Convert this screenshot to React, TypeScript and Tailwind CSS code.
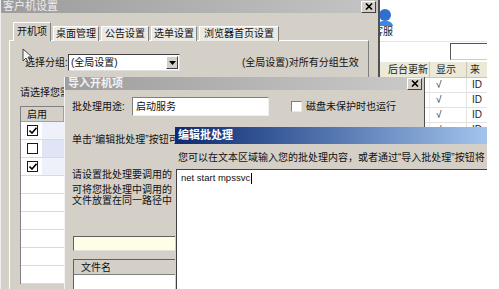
import React from 'react';

const font = "font-['Liberation_Sans','Noto_Sans_CJK_SC',sans-serif]";

const CloseBtn = () => (
  <div className="w-[15px] h-[12px] bg-[#d4d0c8] border border-t-white border-l-white border-r-[#404040] border-b-[#404040] flex items-center justify-center">
    <svg width="8" height="7" viewBox="0 0 8 7">
      <path d="M1 0.5 L7 6.5 M7 0.5 L1 6.5" stroke="#000" strokeWidth="1.6" />
    </svg>
  </div>
);

const Check = ({ on }: { on: boolean }) => (
  <div className="w-[11px] h-[11px] bg-white border border-[#1a1a1a] flex items-center justify-center">
    {on && (
      <svg width="8" height="7" viewBox="0 0 8 7">
        <path d="M0.5 3.5 L3 6 L7.5 0.8" stroke="#000" strokeWidth="1.6" fill="none" />
      </svg>
    )}
  </div>
);

const tabs = [
  { label: '桌面管理', w: 'w-[46px]' },
  { label: '公告设置', w: 'w-[48px]' },
  { label: '选单设置', w: 'w-[46px]' },
  { label: '浏览器首页设置', w: 'w-[80px]' },
];

const rowTints = ['bg-[#eef0fa]', 'bg-[#dfe5f4]', 'bg-[#eef0fa]', 'bg-white', 'bg-white', 'bg-white', 'bg-white', 'bg-white', 'bg-white'];

const BackApp = () => (
  <div className="absolute left-[372px] top-0 w-[115px] h-[289px] bg-white">
    <svg className="absolute left-[2px] top-[7px]" width="20" height="20" viewBox="0 0 20 20">
      <circle cx="11" cy="8" r="6" fill="#2f6fd0" />
      <path d="M3 19 C4 12 18 12 19 19 Z" fill="#3f86e0" />
    </svg>
    <div className="absolute left-[1px] top-[26px] text-[10px] leading-[12px] text-[#222]">客服</div>
    <div className="absolute left-[8px] top-[41px] w-[107px] h-px bg-[#e4e4e4]" />
    <div className="absolute left-[78px] top-[43px] w-[37px] h-[17px] bg-white border border-r-0 border-t-[#555] border-l-[#555] border-b-[#ccc]" />
    <div className="absolute left-[8px] top-[62px] w-[107px] flex flex-col overflow-hidden">
      <div className="h-[16px] flex bg-[#ece9d8] border-b border-[#c8c5b8] text-[10px] leading-[15px] text-[#222]">
        <div className="w-[50px] pl-[8px] border-r border-[#c8c5b8] whitespace-nowrap">后台更新</div>
        <div className="w-[37px] pl-[6px] border-r border-[#c8c5b8]">显示</div>
        <div className="w-[18px] pl-[3px] overflow-hidden whitespace-nowrap">来</div>
      </div>
      {[0, 1, 2, 3].map((i) => (
        <div key={i} className="h-[15px] flex border-b border-[#e2e2e2] text-[10px] leading-[14px] text-[#222]">
          <div className="w-[50px] border-r border-[#eee]" />
          <div className="w-[37px] pl-[6px] border-r border-[#e2e2e2]">√</div>
          <div className="w-[18px] pl-[5px] overflow-hidden whitespace-nowrap">ID</div>
        </div>
      ))}
    </div>
  </div>
);

const MainDialog = () => (
  <div className="absolute left-0 top-0 w-[380px] h-[300px] bg-[#d4d0c8] border-l border-l-[#eeeeee] border-r-2 border-r-[#505050] flex flex-col">
    <div className="h-[15px] flex items-center justify-between bg-linear-to-r from-[#9c9c9c] to-[#c4c4c4] pl-[2px] pr-[2px]">
      <span className="text-[11px] leading-[13px] text-[#eeeeee]">客户机设置</span>
      <CloseBtn />
    </div>
    <div className="pl-[8px] pt-[9px] flex flex-col">
      <div className="h-[19px] flex items-end pl-[4px] gap-[2px] relative z-10">
        <div className="w-[38px] h-[19px] bg-[#d4d0c8] border border-b-0 border-t-white border-l-white border-r-[#808080] text-[10px] leading-[17px] text-center text-[#111]">
          开机项
        </div>
        {tabs.map((t) => (
          <div
            key={t.label}
            className={`${t.w} h-[15px] bg-[#ebe9e4] border border-b-0 border-t-white border-l-white border-r-[#808080] text-[10px] leading-[14px] text-center text-[#111] whitespace-nowrap`}
          >
            {t.label}
          </div>
        ))}
      </div>
      <div className="-mt-px w-[360px] h-[260px] border border-t-white border-l-white border-r-[#808080] border-b-[#808080] pl-[10px] pt-[13px] flex flex-col text-[10px] text-[#111]">
        <div className="h-[17px] flex items-center ml-[5px]">
          <span className="w-[43px] whitespace-nowrap">选择分组:</span>
          <div className="w-[112px] h-[17px] bg-white border border-t-[#404040] border-l-[#404040] border-r-[#e0e0e0] border-b-[#e0e0e0] flex items-center justify-between pl-[2px] pr-[1px]">
            <span>(全局设置)</span>
            <div className="w-[12px] h-[13px] bg-[#d4d0c8] border border-t-white border-l-white border-r-[#404040] border-b-[#404040] flex items-center justify-center">
              <svg width="7" height="4" viewBox="0 0 7 4">
                <path d="M0 0 L7 0 L3.5 4 Z" fill="#000" />
              </svg>
            </div>
          </div>
          <span className="ml-[62px] whitespace-nowrap">(全局设置)对所有分组生效</span>
        </div>
        <div className="mt-[15px] w-[44px] h-[14px] leading-[14px] whitespace-nowrap overflow-hidden">请选择您需</div>
        <div className="mt-[6px] w-[80px] border-l border-t border-[#808080] flex flex-col">
          <div className="h-[15px] flex bg-[#d4d0c8] border-b border-[#a0a0a0]">
            <div className="w-[43px] pl-[6px] leading-[15px] border-r border-[#a0a0a0]">启用</div>
          </div>
          {rowTints.map((tint, i) => (
            <div key={i} className="h-[18px] flex bg-white border-b border-[#dadada]">
              <div className="w-[21px] flex items-center justify-end pr-[4px]">
                {i < 3 && <Check on={i !== 1} />}
              </div>
              <div className={`flex-1 ${tint}`} />
            </div>
          ))}
        </div>
      </div>
    </div>
  </div>
);

const ImportDialog = () => (
  <div className="absolute left-[64px] top-[77px] w-[361px] h-[220px] bg-[#d4d0c8] border-l border-l-[#f4f4f4] border-r border-r-[#505050] flex flex-col text-[10px] text-[#111]">
    <div className="h-[19px] flex items-center justify-between bg-linear-to-r from-[#9e9e9e] to-[#cacaca] pl-[3px] pr-[2px]">
      <span className="text-[11px] leading-[13px] font-bold text-[#f2f2f2]">导入开机项</span>
      <CloseBtn />
    </div>
    <div className="pl-[7px] flex flex-col">
      <div className="mt-[7px] h-[19px] flex items-center">
        <span className="w-[60px] whitespace-nowrap">批处理用途:</span>
        <div className="w-[137px] h-[19px] bg-white border border-t-[#808080] border-l-[#808080] border-r-[#f0f0f0] border-b-[#f0f0f0] pl-[3px] leading-[17px]">
          启动服务
        </div>
        <div className="ml-[22px] w-[11px] h-[11px] bg-white border border-t-[#808080] border-l-[#808080] border-r-[#e8e8e8] border-b-[#e8e8e8]" />
        <span className="ml-[4px] whitespace-nowrap">磁盘未保护时也运行</span>
      </div>
      <div className="mt-[18px] w-[103px] leading-[12px] whitespace-nowrap overflow-hidden">单击“编辑批处理”按钮可</div>
      <div className="mt-[23px] w-[103px] leading-[12px] whitespace-nowrap overflow-hidden">请设置批处理要调用的</div>
      <div className="mt-[3px] w-[103px] leading-[11px] whitespace-nowrap overflow-hidden">可将您批处理中调用的</div>
      <div className="w-[103px] leading-[11px] whitespace-nowrap overflow-hidden">文件放置在同一路径中</div>
      <div className="mt-[30px] ml-[1px] w-[200px] h-[15px] bg-[#fffde6] border border-t-[#606060] border-l-[#606060] border-r-[#e0e0e0] border-b-[#e0e0e0]" />
      <div className="mt-[8px] ml-[1px] w-[200px] h-[40px] bg-white border border-t-[#606060] border-l-[#606060] flex flex-col">
        <div className="h-[15px] bg-[#d4d0c8] border-b border-[#808080] pl-[7px] leading-[15px]">文件名</div>
      </div>
    </div>
  </div>
);

const EditDialog = () => (
  <div className="absolute left-[175px] top-[127px] w-[312px] h-[170px] bg-[#d4d0c8] flex flex-col text-[10px] text-[#111]">
    <div className="h-[17px] flex items-center bg-linear-to-r from-[#0e2a72] to-[#a3c4ec] pl-[3px]">
      <span className="text-[11px] leading-[13px] font-bold text-white">编辑批处理</span>
    </div>
    <div className="h-[25px] pl-[3px] pt-[8px] leading-[12px] whitespace-nowrap overflow-hidden">
      您可以在文本区域输入您的批处理内容，或者通过“导入批处理”按钮将
    </div>
    <div className="flex-1 ml-px bg-white border-t border-l border-[#404040] pl-[4px] pt-[2px] flex items-start">
      <span className="font-['Liberation_Sans',sans-serif] text-[9.5px] leading-[12px] text-[#111]">net start mpssvc</span>
      <span className="ml-px mt-px w-px h-[11px] bg-black" />
    </div>
  </div>
);

export default function App() {
  return (
    <div className={`relative w-[499px] h-[289px] overflow-hidden bg-white ${font}`}>
      <BackApp />
      <MainDialog />
      <ImportDialog />
      <EditDialog />
      <svg className="absolute left-[22px] top-[48px]" width="12" height="16" viewBox="0 0 12 16">
        <path d="M1 1 L1 13 L4 10 L6.5 15 L8.5 14 L6 9 L10 9 Z" fill="#f4f4f4" stroke="#444" strokeWidth="1" />
      </svg>
    </div>
  );
}
